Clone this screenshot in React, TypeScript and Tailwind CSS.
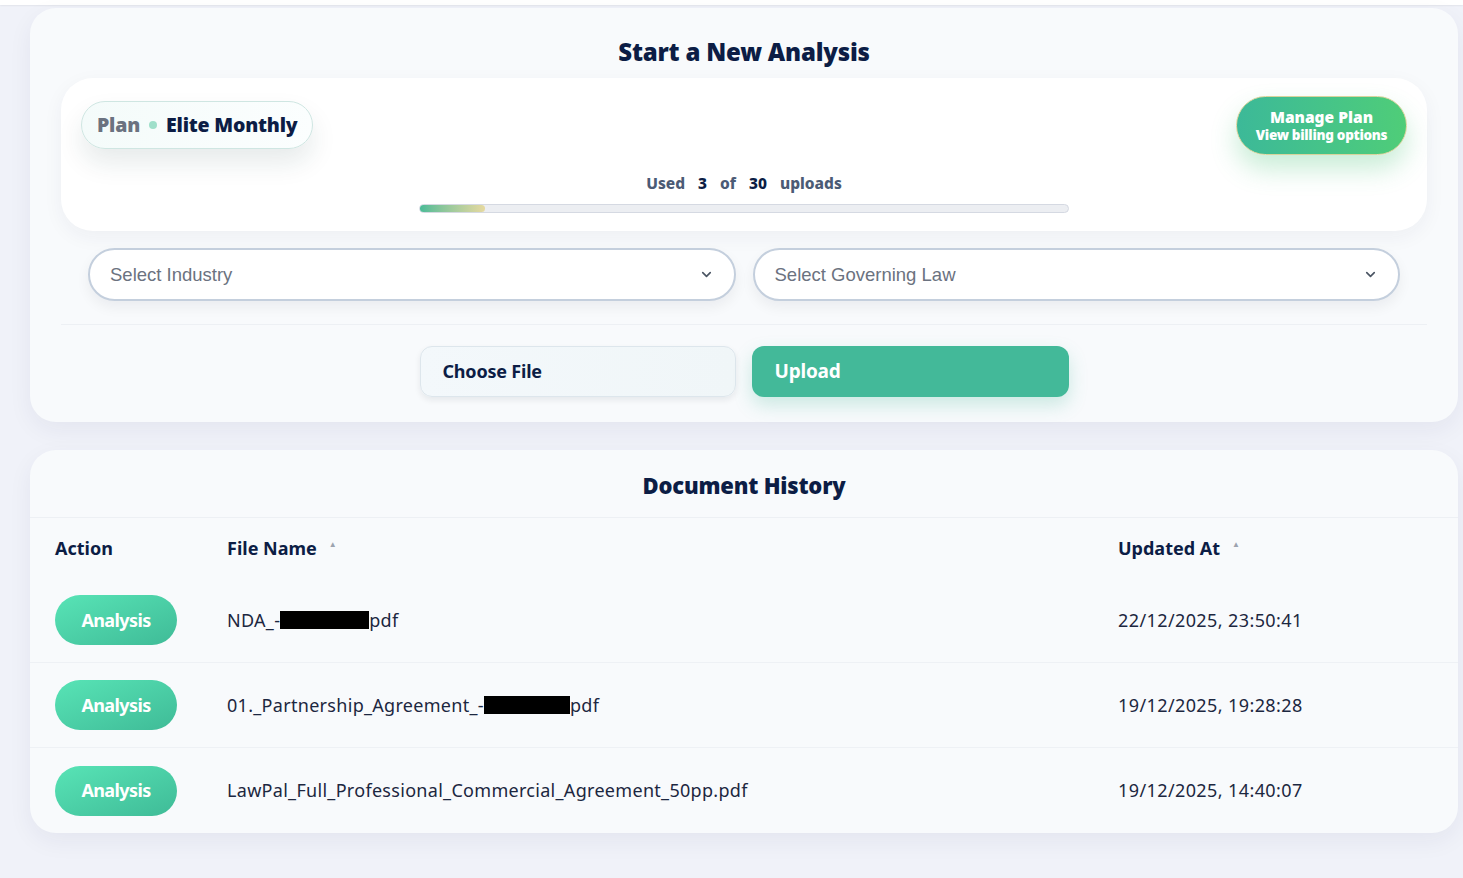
import React from "react";

const navy = "text-[#0c1d45]";

const rows = [
  { pre: "NDA_-", box: 89, post: "pdf", date: "22/12/2025, 23:50:41" },
  { pre: "01._Partnership_Agreement_-", box: 86, post: "pdf", date: "19/12/2025, 19:28:28" },
  { pre: "LawPal_Full_Professional_Commercial_Agreement_50pp.pdf", box: 0, post: "", date: "19/12/2025, 14:40:07" },
];

const Chevron = () => (
  <svg width="15" height="15" viewBox="0 0 24 24" fill="none" stroke="#4b5563" strokeWidth="2.6" strokeLinecap="round" strokeLinejoin="round">
    <path d="M6 9l6 6 6-6" />
  </svg>
);

const SortUp = () => <span className="ml-[12px] text-[8px] text-[#9ca3af] relative -top-[4px]">▲</span>;

const Select = ({ label }: { label: string }) => (
  <div className="flex h-[53px] items-center justify-between rounded-full border-2 border-[#c4cfdd] bg-white pl-[20px] pr-[20px] shadow-[0_6px_14px_rgba(15,23,42,0.06)]">
    <span className="font-['Liberation_Sans',Arial,sans-serif] text-[18.5px] text-[#6b7280]">{label}</span>
    <Chevron />
  </div>
);

export default function App() {
  return (
    <div className="min-h-screen bg-[#f0f2f9] font-['Noto_Sans',sans-serif]">
      <div className="h-[5px] bg-white shadow-[0_1px_2px_rgba(0,0,0,0.06)]" />
      <div className="pl-[30px] pr-[5px] pt-[3px] pb-[46px] flex flex-col gap-[28px]">
        {/* Start a New Analysis */}
        <section className="rounded-[26px] bg-[#f8fafc] pt-[28px] pb-[25px] px-[31px] shadow-[0_8px_24px_rgba(30,41,80,0.06)]">
          <h1 className={`text-center text-[24px] font-black leading-[32px] tracking-[-0.2px] ${navy}`}>
            Start a New Analysis
          </h1>
          <div className="mt-[10px] grid h-[153px] grid-cols-[1fr_650px_1fr] rounded-[32px] bg-white px-[20px] pt-[18px] pb-[18px] shadow-[0_6px_20px_rgba(30,41,80,0.05)]">
            <div className="flex items-start">
              <div className="mt-[5px] flex h-[48px] items-center gap-[9px] rounded-full border border-[#cfe6e2] bg-gradient-to-r from-[#f4fbfa] to-[#fbfefe] px-[15px] shadow-[0_14px_26px_rgba(15,60,60,0.10)] text-[19.5px] font-black tracking-[-0.2px]">
                <span className="text-[#6b7280]">Plan</span>
                <span className="h-[8px] w-[8px] rounded-full bg-[#9fdfca]" />
                <span className={navy}>Elite Monthly</span>
              </div>
            </div>
            <div className="flex flex-col items-center justify-end">
              <div className="flex gap-[13px] text-[15.5px] font-extrabold text-[#4b5b75]">
                <span>Used</span>
                <span className={navy}>3</span>
                <span>of</span>
                <span className={navy}>30</span>
                <span>uploads</span>
              </div>
              <div className="mt-[9px] h-[9px] w-full rounded-full border border-[#d5d9e2] bg-[#eceef2]">
                <div className="h-full w-[10%] rounded-full bg-gradient-to-r from-[#48bb97] to-[#e6d9a0]" />
              </div>
            </div>
            <div className="flex items-start justify-end">
              <button className="flex h-[59px] w-[171px] flex-col items-center justify-center rounded-full border border-[#d8d49c] bg-gradient-to-r from-[#3cb998] to-[#4fcd78] leading-[18px] text-white shadow-[0_14px_26px_rgba(60,190,110,0.28)]">
                <span className="text-[15.5px] font-black">Manage Plan</span>
                <span className="text-[13.5px] font-black tracking-[-0.3px]">View billing options</span>
              </button>
            </div>
          </div>

          <div className="mt-[17px] grid grid-cols-2 gap-[17px] pl-[27px] pr-[27px]">
            <Select label="Select Industry" />
            <Select label="Select Governing Law" />
          </div>

          <div className="mt-[23px] h-px bg-[#edf0f4]" />

          <div className="mt-[21px] flex justify-center gap-[16px]">
            <button className={`flex h-[51px] w-[316px] items-center rounded-[12px] border border-[#dde6ec] bg-gradient-to-r from-[#f3f8fb] to-[#f0f6f8] pl-[22px] text-[18px] font-bold ${navy} shadow-[0_3px_6px_rgba(15,23,42,0.08)] tracking-[-0.2px]`}>
              Choose File
            </button>
            <button className="flex h-[51px] w-[317px] items-center rounded-[12px] bg-[#43b999] pl-[23px] text-[19px] font-bold text-white shadow-[0_8px_18px_rgba(67,185,153,0.25)] tracking-[-0.2px]">
              Upload
            </button>
          </div>
        </section>

        {/* Document History */}
        <section className="rounded-[26px] bg-[#f8fafc] pt-[20px] shadow-[0_8px_24px_rgba(30,41,80,0.06)]">
          <h2 className={`text-center text-[22px] font-black leading-[30px] tracking-[-0.2px] ${navy}`}>
            Document History
          </h2>
          <div className="mt-[17px] h-px bg-[#edf0f4]" />
          <div className={`grid h-[60px] grid-cols-[172px_891px_1fr] items-center pl-[25px] text-[18px] font-bold ${navy}`}>
            <span>Action</span>
            <span className="flex items-center">File Name<SortUp /></span>
            <span className="flex items-center">Updated At<SortUp /></span>
          </div>
          {rows.map((r, i) => (
            <div
              key={i}
              className={`grid h-[85px] grid-cols-[172px_891px_1fr] items-center pl-[25px] text-[18px] text-[#1c2740] ${i < rows.length - 1 ? "border-b border-[#eef1f5]" : ""}`}
            >
              <div>
                <button className="h-[50px] w-[122px] rounded-full bg-gradient-to-br from-[#58e4b6] to-[#3fbb97] text-[18px] font-bold tracking-[-0.6px] text-white">
                  Analysis
                </button>
              </div>
              <span className="flex items-center tracking-[0.3px]">
                {r.pre}
                {r.box > 0 && <span className="inline-block h-[18px] bg-black" style={{ width: r.box }} />}
                {r.post}
              </span>
              <span className="tracking-[0.4px]">{r.date}</span>
            </div>
          ))}
        </section>
      </div>
    </div>
  );
}
